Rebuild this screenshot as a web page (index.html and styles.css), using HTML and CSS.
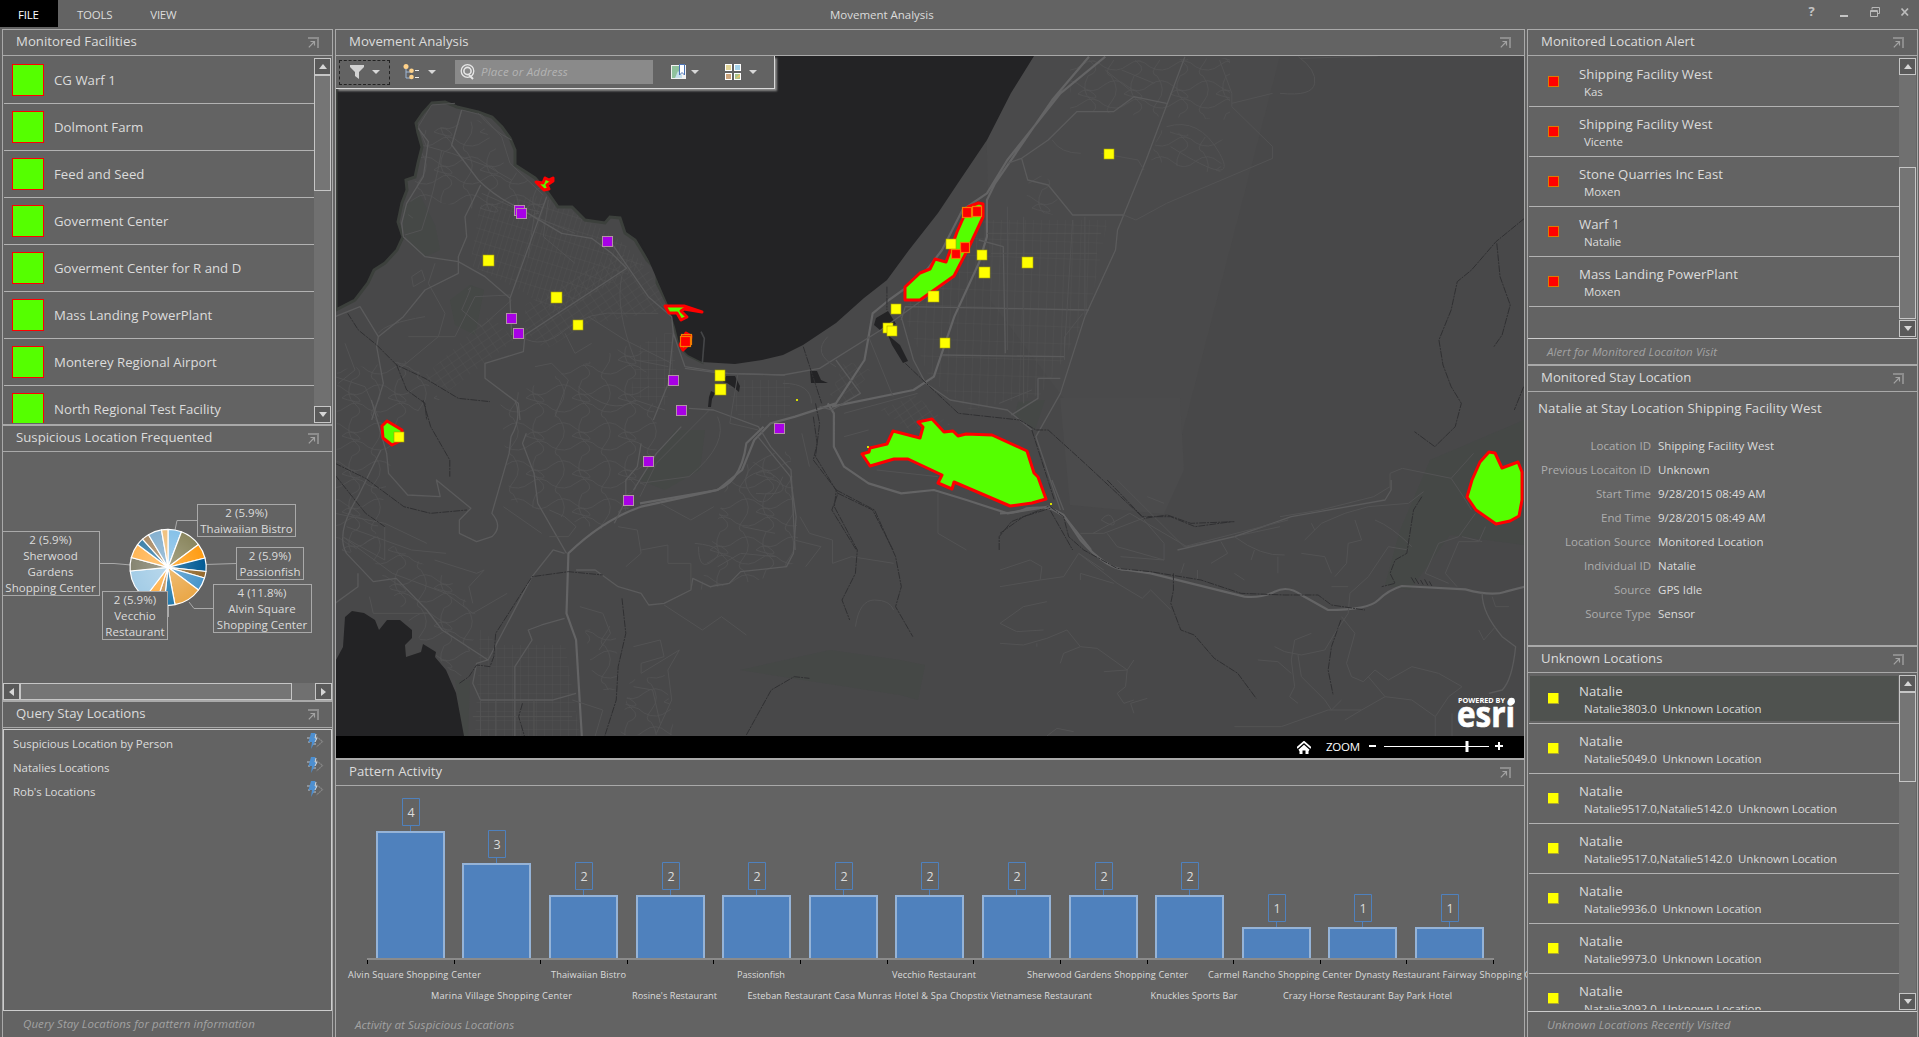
FILE: index.html
```html
<!DOCTYPE html>
<html lang="en">
<head>
<meta charset="utf-8">
<title>Movement Analysis</title>
<link rel="stylesheet" href="styles.css">
</head>
<body>
<svg class="defs" width="0" height="0">
  <defs>
    <symbol id="popout" viewBox="0 0 11 11"><path d="M0 1H10V11" fill="none" stroke="#8d8d8d" stroke-width="2"/><path d="M2.5 4.5H6.5V8.5M6.5 4.5L.8 10.3" fill="none" stroke="#a3a3a3" stroke-width="1.2"/></symbol>
    <symbol id="run" viewBox="0 0 17 17"><path d="M9.5 3.500L15.500 8.500L9.500 14" fill="none" stroke="#858585" stroke-width="1.200" stroke-dasharray="2 .6"/><path d="M3 5H0M3 9H1M9 11H6" stroke="#b9c4d0" stroke-width="1"/><path d="M4 0H8.500L7.500 5H10L4 16L5 9H1.500Z" fill="#4d8fd0"/><path d="M9 1L8 5H10L8 9" fill="none" stroke="#d5dde6"/></symbol>
    <symbol id="caret" viewBox="0 0 8 4"><path d="M0 0H8L4 4Z" fill="#d8d8d8"/></symbol>
  </defs>
</svg>
<header class="titlebar">
  <nav class="menu"><span class="menu-item active">FILE</span><span class="menu-item">TOOLS</span><span class="menu-item">VIEW</span></nav>
  <div class="app-title">Movement Analysis</div>
  <svg class="window-buttons" width="100" height="28" viewBox="1810 0 100 28">
    <text x="1808.500" y="16" class="help" font-size="13">?</text>
    <path d="M1840 16H1848" stroke="#c4c4c4" stroke-width="2"/>
    <path d="M1872 9.500V7.500H1879.500V13.500H1877.500M1870.500 10.500H1877.500V16.500H1870.500ZM1870.500 11.500H1877" fill="none" stroke="#b8b8b8"/>
    <path d="M1901.500 8.500L1908 15.500M1908 8.500L1901.500 15.500" stroke="#bcbcbc" stroke-width="1.8"/>
  </svg>
</header>
<main class="dashboard">
  <div class="column col-left">
    <section class="panel facilities">
      <h2 class="panel-head">Monitored Facilities<svg class="popout"><use href="#popout"/></svg></h2>
      <div class="scroll-area">
        <ul class="facility-list">
          <li><i></i>CG Warf 1</li><li><i></i>Dolmont Farm</li><li><i></i>Feed and Seed</li><li><i></i>Goverment Center</li><li><i></i>Goverment Center for R and D</li><li><i></i>Mass Landing PowerPlant</li><li><i></i>Monterey Regional Airport</li><li><i></i>North Regional Test Facility</li>
        </ul>
        <div class="vscroll"><b class="btn up"></b><b class="thumb t-facilities"></b><b class="btn down"></b></div>
      </div>
    </section>
    <section class="panel suspicious">
      <h2 class="panel-head">Suspicious Location Frequented<svg class="popout"><use href="#popout"/></svg></h2>
      <svg class="pie" viewBox="3 452 329 231">
        <defs>
          <radialGradient id="shine" gradientUnits="userSpaceOnUse" cx="168" cy="567.300" r="38"><stop offset="0" stop-color="#fff" stop-opacity=".25"/><stop offset="1" stop-color="#fff" stop-opacity="0"/></radialGradient>
        </defs>
        <g fill="none" stroke="#a9a9a9">
          <path d="M175 530L177 520.500H197M205 564.500L236 563.500M189 602L194 608.500H213M168.500 605V617M100 563.500H114L131 565"/>
        </g>
        <g stroke="#fff" stroke-width="1.200" stroke-linejoin="round">
          <path fill="#86c1e8" d="M168 567.300V529.300A38 38 0 0 1 181.500 531.800Z"/>
          <path fill="#8a865e" d="M168 567.300L181.500 531.800A38 38 0 0 1 198.500 544.600Z"/>
          <path fill="#ff9c12" d="M168 567.300L198.500 544.600A38 38 0 0 1 205 558Z"/>
          <path fill="#015a94" d="M168 567.300L205 558A38 38 0 0 1 206 571.500Z"/>
          <path fill="#93682c" d="M168 567.300L206 571.500A38 38 0 0 1 204.500 578Z"/>
          <path fill="#4795cb" d="M168 567.300L204.500 578A38 38 0 0 1 198.500 590Z"/>
          <path fill="#eaa747" d="M168 567.300L198.500 590A38 38 0 0 1 175 604.700Z"/>
          <path fill="#237aad" d="M168 567.300L175 604.700A38 38 0 0 1 164 605.100Z"/>
          <path fill="#c99253" d="M168 567.300L164 605.100A38 38 0 0 1 156 603.300Z"/>
          <path fill="#ffae42" d="M168 567.300L156 603.300A38 38 0 0 1 145 597.500Z"/>
          <path fill="#a3cce6" d="M168 567.300L145 597.500A38 38 0 0 1 130.200 571Z"/>
          <path fill="#858470" d="M168 567.300L130.200 571A38 38 0 0 1 131.300 557.500Z"/>
          <path fill="#ffb656" d="M168 567.300L131.300 557.500A38 38 0 0 1 137.500 544.600Z"/>
          <path fill="#3f82ab" d="M168 567.300L137.500 544.600A38 38 0 0 1 142.500 539.100Z"/>
          <path fill="#ab8c67" d="M168 567.300L142.500 539.100A38 38 0 0 1 148.500 534.700Z"/>
          <path fill="#85b0cf" d="M168 567.300L148.500 534.700A38 38 0 0 1 161.500 529.900Z"/>
          <path fill="#efc180" d="M168 567.300L161.500 529.900A38 38 0 0 1 168 529.300Z"/>
        </g>
        <circle cx="168" cy="567.300" r="38" fill="url(#shine)"/>
        <g class="callouts">
          <rect x="197.500" y="504.500" width="98" height="32"/><rect x="236.500" y="547.500" width="67" height="32"/><rect x="213.500" y="584.500" width="98" height="48"/><rect x="102.500" y="591.500" width="65" height="48"/><rect x="-.5" y="531.500" width="100" height="64"/>
        </g>
        <g class="pie-text">
          <text x="246.500" y="517">2 (5.9%)</text><text x="246.500" y="533">Thaiwaiian Bistro</text>
          <text x="270" y="560">2 (5.9%)</text><text x="270" y="576">Passionfish</text>
          <text x="262" y="597">4 (11.8%)</text><text x="262" y="613">Alvin Square</text><text x="262" y="629">Shopping Center</text>
          <text x="135" y="604">2 (5.9%)</text><text x="135" y="620">Vecchio</text><text x="135" y="636">Restaurant</text>
          <text x="50.500" y="544">2 (5.9%)</text><text x="50.500" y="560">Sherwood</text><text x="50.500" y="576">Gardens</text><text x="50.500" y="592">Shopping Center</text>
        </g>
      </svg>
      <div class="hscroll"><b class="btn left"></b><b class="thumb"></b><b class="btn right"></b></div>
    </section>
    <section class="panel queries">
      <h2 class="panel-head">Query Stay Locations<svg class="popout"><use href="#popout"/></svg></h2>
      <ul class="query-list">
        <li>Suspicious Location by Person<svg><use href="#run"/></svg></li>
        <li>Natalies Locations<svg><use href="#run"/></svg></li>
        <li>Rob's Locations<svg><use href="#run"/></svg></li>
      </ul>
      <footer class="panel-foot foot-query">Query Stay Locations for pattern information</footer>
    </section>
  </div>

  <div class="column col-center">
    <section class="panel map-panel">
      <h2 class="panel-head">Movement Analysis<svg class="popout"><use href="#popout"/></svg></h2>
      <div class="map">
        <svg class="basemap" viewBox="336 56 1188 680">
          <defs>
            <pattern id="grid-a" width="5" height="13" patternUnits="userSpaceOnUse" patternTransform="rotate(17)"><path d="M0 0H5M0 0V13" class="street"/></pattern>
            <pattern id="grid-b" width="9" height="7" patternUnits="userSpaceOnUse" patternTransform="rotate(-34)"><path d="M0 0H9M0 0V7" class="street"/></pattern>
            <pattern id="grid-c" width="8" height="17" patternUnits="userSpaceOnUse" patternTransform="rotate(2)"><path d="M0 0H8M0 0V17" class="street"/></pattern>
            <pattern id="grid-d" width="8" height="9" patternUnits="userSpaceOnUse"><path d="M0 0H8M0 0V9" class="street"/></pattern>
            <pattern id="curvy" width="46" height="38" patternUnits="userSpaceOnUse"><path d="M0 9Q12 0 23 10T46 9M7 0Q17 14 8 25T7 38M30 0Q22 15 33 24T30 38M0 29Q13 36 24 27T46 29M20 18Q28 10 36 18T20 18" class="street"/></pattern>
          </defs>
          <rect x="336" y="56" width="1189" height="680" fill="#484849"/>
          <path fill="#4a4a4b" d="M985 56H1280L1180 442L1065 400L990 300Z"/>
          <path fill="#4b4b4c" d="M1060 398H1180L1184 470L1164 514L1070 505Z"/>
          <g class="park">
            <path d="M403 230L403 207L420 195L435 225L440 250L425 257L410 245Z"/>
            <path d="M470 285L484 290L475 335L455 325L450 300Z"/>
            <path d="M740 670L830 650L900 660L925 665L918 700L900 695L790 678Z"/>
            <path d="M1430 460L1524 420V545L1450 535L1410 590L1385 585L1400 530Z"/>
            <path d="M675 430L705 430L700 470L665 490L640 480Z"/>
            <path d="M455 680H470L468 736H463Z"/>
            <path d="M1018 402L1045 400L1035 430L1015 415Z"/>
          </g>
          <g class="texture">
            <path fill="url(#grid-a)" d="M480 205L545 195L620 240L645 265L556 315L520 290L470 265Z"/>
            <path fill="url(#grid-b)" d="M525 305L620 252L650 272L668 310L585 325L545 350L525 330Z"/>
            <path fill="url(#grid-b)" d="M420 380L490 315L515 340L450 390Z"/>
            <path fill="url(#grid-d)" d="M640 345L672 330L676 370L665 405L630 395Z"/>
            <path fill="url(#grid-c)" d="M903 310L985 220H1108L1090 308L1062 362L1040 395L970 410L930 380Z"/>
            <path fill="url(#grid-d)" d="M480 630L500 645H565L580 736H475Z"/>
            <path fill="url(#grid-d)" d="M725 380H790V415L740 420Z"/>
            <path fill="url(#grid-b)" d="M845 360L870 370L850 405L830 395Z"/>
            <path fill="url(#grid-b)" d="M880 410L915 395L950 425L910 430Z"/>
            <g fill="url(#curvy)">
              <path d="M425 130L480 120L505 165L550 195L535 220L425 200L405 230Z"/>
              <path d="M337 370L410 360L440 400L400 420L375 540L336 560Z"/>
              <path d="M500 400L640 340L660 440L640 500L600 530L510 500Z"/>
              <path d="M1070 60H1150L1230 58V120L1130 115L1070 110Z"/>
              <path d="M1160 130L1225 140L1220 175L1150 160Z"/>
              <path d="M1030 170L1060 185L1055 215L1025 210Z"/>
              <path d="M730 470L790 450L800 560L760 580L700 590Z"/>
              <path d="M630 680L665 675L675 735H620Z"/>
              <path d="M585 630L615 625L620 690L595 690Z"/>
              <path d="M350 520L450 580L480 620L460 680L420 640Z"/>
            </g>
          </g>
          <g class="water">
            <path stroke="#3c403c" stroke-width="3" d="M336 310L355 300L368 283L374 270L385 263L397 250L403 237L398 222L402 203L407 190L406 180L415 177L418 163L422 147L418 133L416 123L423 113L432 103L445 102L457 107L478 112L492 117L502 127L510 138L515 150L515 165L535 178L548 193L558 207L572 207L585 220L605 223L610 217L620 218L625 233L635 240L647 260L657 270L657 283L668 305L675 327L680 347L688 355L702 362V56H336Z"/>
            <path d="M668 305L675 327L680 347L688 355L702 362L735 364L762 360L783 355L803 345L836 323L864 298L887 280L909 250L938 213L958 183L987 140L1011 93L1034 56H640V240Z"/>
            <path d="M336 660L343 647L345 617L352 611L364 613L375 620L379 630L387 620H400L412 630V638L405 645L406 657L421 652L423 644L436 652L435 657L446 670L456 693L461 720L464 736H336Z"/>
            <path d="M726 376H735L740 386L739 392L733 387L727 383L723 382ZM711 391L715 393L712 399L711 407H708L709 397Z"/>
            <path d="M876 318L888 311L896 324L880 330L874 325ZM888 335L900 345L908 361L903 363L892 345ZM810 371H817L821 380L828 383H811Z"/>
          </g>
          <g class="lots">
            <g transform="translate(335 50) scale(.33333)">
              <path class="minor" d="M380 180L440 195L500 260L525 340L625 435M360 160L290 165L250 230L275 290M430 190Q470 240 530 270M280 290L350 310L460 350L530 390M320 300Q300 420 260 540L210 555M440 430L600 500L720 550M300 640L280 700L330 790L310 860L190 960M130 850Q150 820 270 800M400 720Q420 690 380 780L440 830L530 750M230 680L260 660L270 690L235 710L230 680M560 860Q620 900 690 840T870 790L970 790M690 850L720 910L770 880M600 950L650 940L700 990L660 1100M760 800L870 870L1010 940M860 680Q840 780 900 930L1000 950M730 1010Q830 1100 900 1050L990 1080M0 980L90 1010L130 1100M30 880L60 960L10 1000M220 860L360 860L420 740L525 735M600 480L580 620M640 450L625 560L720 640"/>
              <path class="road" d="M380 180L350 285L430 390Q480 440 545 470L680 550L770 565L830 610L875 655L570 855L565 905L450 940L450 985L550 1060L555 1110M437 405L390 500L395 560L370 620L370 670L270 720L205 800L130 860L125 890L145 1000L110 1110M205 560L270 620L370 635L450 680L525 745L530 855M635 440L525 745M830 580L940 740L1010 800L1015 850L1050 950M1015 850L1000 1000L955 1110M1050 950L1180 970L1350 975M250 235L280 275L265 380L215 460L200 520L205 560M0 800L75 770L130 860"/>
              <path class="creek" d="M38 790L70 840L125 885L185 945L270 985L370 1045L465 1055M185 945L215 1020L270 1060L275 1110"/>
              <path class="pier" d="M1098 845L1108 865L1102 940"/>
            </g>
            <g transform="translate(640 50) scale(.40816 .33333)">
              <path class="highway" d="M1140 20L1030 130L900 330L850 430L790 480L740 600L690 680L610 750L570 790L550 930L480 1060L380 1100L320 1120L280 1170L250 1260L190 1320L0 1360M1100 20L1010 150L870 400L850 450L850 560L830 640L770 800L720 980L670 1020L470 1070M460 1060L475 1090V1190L500 1250L560 1300L640 1330L720 1320L800 1350L900 1390L1000 1370L1040 1400L1105 1500"/>
              <path class="road" d="M1335 20L1240 330L1170 540L1165 600L1090 800L1030 1030L970 1160L1030 1380M900 340L935 325L1000 270L1070 185H1160L1210 140L1290 160M935 325L950 390L1000 405L1060 495H1185M110 955L200 970L350 975L440 955L590 840L770 680M640 810L650 770L1100 780M640 800L670 930L700 1000L760 1050L900 1080L960 1140M740 915L1040 920M975 985H1030M910 1095L975 1045V985M830 570L890 590L895 910M440 1070L470 1080L540 1030L480 930M120 1075L180 1080L290 1130L320 1190L370 1260L380 1500"/>
              <path class="minor" d="M1185 495L1215 510L1290 460L1550 325V290L1450 170V130L1420 30M1450 160L1550 130M1140 60L1200 120M1130 310L1220 330L1235 360M1010 270Q1030 310 1080 310M1180 60L1260 100M1290 230Q1370 200 1420 310T1300 290M850 550H1130M860 610H1120M900 470V900M940 500V1060M1090 500V800M960 1020L880 1060M1085 790L1040 860V930M290 1140L220 1120L240 970M170 1080L40 1240L0 1340M190 1100Q220 1180 120 1280L0 1300M350 1000Q420 1000 420 1060M330 1210Q230 1260 270 1330T350 1280M500 1160L560 1140M580 1260L730 1280M730 1330V1450L800 1500M1130 1410Q1150 1380 1160 1410T1130 1410M1110 1450L1200 1390L1340 1490L1568 1430M1060 510L1040 900M560 860L620 1040M460 860Q420 910 480 950M500 1090L680 1030"/>
              <path class="creek" d="M650 940L710 1010L780 1090L930 1110L970 1140H1000L1090 1240L1230 1400L1300 1400L1360 1430L1450 1415M430 1060L440 1120L430 1220L485 1330L470 1380L530 1500M485 1330L570 1380L620 1500M880 1500V1460L910 1415L1000 1370L1060 1500M960 1140L1015 1350M605 710V780M400 890L445 1060"/>
            </g>
            <g transform="translate(335 400) scale(.38265 .33333)">
              <path class="highway" d="M1120 80L1075 130Q1060 260 980 275L800 320Q700 360 610 460L605 640L630 720L645 1008"/>
              <path class="road" d="M470 0Q490 50 460 110L455 160L410 340Q440 380 410 410L370 425L325 400V360L355 325L265 240L275 290L190 285L140 220L135 160L95 0M500 100L490 130L520 220L530 310L605 460M120 150L60 290Q0 400 30 460L100 545L160 535L240 630L280 690L400 780L370 790L360 850L380 900H570L630 880M600 460L570 450L515 530L400 780M630 510H680L740 560L800 580L820 615L860 610L930 570L935 535L980 560L1030 550L1060 515L1180 500L1198 460L1205 350L1190 230L1105 110M905 80L840 160L780 270M800 130L790 200L760 240V300L730 370M600 655L540 675L505 690L515 720L470 800V1008M60 520V560L0 610"/>
              <path class="minor" d="M20 410L150 520L290 580L360 640L450 580M90 590L100 640L240 640M130 380V480L20 410M30 380L200 450L290 460M260 480L370 520L390 510L350 560L360 610M0 340L130 370L240 430M860 615L960 690L1010 650L1075 705M740 380L790 390L800 460L760 500M800 450L870 435V490L930 490V570M950 440Q950 520 990 480T940 430M1000 500L1060 460L1150 470M850 310L930 360L990 320M1070 240Q1120 190 1160 240T1100 280M1065 380L1150 400M1215 350L1240 400L1300 420V490L1350 470L1460 490M1360 680Q1370 600 1410 600T1460 630M640 620L700 640L720 700L690 750M780 740L850 720L860 770L800 790V820L900 750L870 810L880 900L840 1000M780 860L830 870L850 970M620 900L700 930L680 1008M1200 420L1270 440L1230 500M1220 100L1240 200M560 330L600 350L630 380L610 410L560 410M440 320L540 400M380 900V1008M420 900V1008M520 900V1008M360 950H620"/>
              <path class="creek" d="M230 0L250 80L300 180V230M0 190L80 235L180 320L250 340L345 330M0 225L80 340L130 380M325 850L350 830L370 795L405 800L415 770L420 700L515 530L610 515L700 525M750 595L760 700L740 800L735 900L705 1008M1250 50L1260 130L1250 180L1310 270L1305 320L1365 450L1360 520L1325 600L1345 660M1310 270L1410 330L1465 470L1480 560L1465 620L1510 710M1075 1005L1140 870L1200 830L1240 835M490 910L480 950L495 1008"/>
            </g>
            <g transform="translate(1000 480) scale(.33482 .33333)">
              <path class="highway" d="M0 100Q50 100 80 85Q150 75 190 105L240 180Q320 270 380 270L450 280L730 350Q780 355 820 335T900 345L980 390Q1100 390 1130 360T1200 318L1390 328Q1470 350 1510 335L1568 320"/>
              <path class="road" d="M155 0L190 90M530 210L700 170L870 110L1150 60L1168 30V0M1440 340Q1440 400 1500 470L1540 500Q1530 600 1500 630L1460 640"/>
              <path class="minor" d="M350 0L550 200L860 120M0 270L90 240L125 260L120 300L0 320M120 300L190 290L235 220L350 310L425 355L450 330L510 390M235 220L310 270M240 300V280L340 310M240 160H310L440 110M320 160L350 200L490 240L490 190L430 120M440 50L490 70M700 170Q780 230 850 225M660 185L680 220L630 250M760 210L750 240M830 230V280M900 220L970 230L990 280M910 180L960 130L1030 100L1100 80L1220 70L1265 35M930 130L940 150M1060 120L1080 180L1040 190L1035 250L1000 290M1120 120Q1170 140 1230 200M990 320H1040M1220 210L1160 200L1100 290L1045 340L1040 400L1000 460L970 510L900 525L850 515L820 500M1020 410L1060 460L1035 550L1050 590L1085 605L1120 570L1160 600L1230 560L1310 580L1380 620M1100 590L1150 650L1080 690L980 690L840 740H700M1150 650L1230 660L1300 710V768M880 480L870 540L880 620L865 650L890 670M770 540L830 545L870 580M890 525L900 590L970 660L990 690L1020 660M930 460L880 480M1030 720L1080 690M0 430L70 380L140 365M0 430L50 455L130 450M0 490L70 495L140 475L200 450L240 500L290 505L380 570L375 620L350 640L370 670L400 660M310 575L380 570L400 540M180 550L190 520L240 500M400 700L390 670L440 655M140 768L170 745L220 755M1300 710L1340 650L1380 620M1350 700V768M1400 700L1440 650L1475 740M1430 450L1445 480L1480 440M1470 350L1480 380H1520M1380 170L1440 185M1420 100L1370 170L1310 190L1270 280L1340 310M1450 140L1430 185H1370L1330 280L1365 320M540 280L550 250M700 280L730 300M590 270V300M110 490V500M360 230L490 240"/>
              <path class="creek" d="M320 0L430 115L500 105L570 130L700 125M150 80L190 110L205 170L250 210L350 265L450 275L600 300L720 340L850 345L950 345L990 375L1090 390M518 280V330L510 370L540 450L580 465L640 535L710 580L765 655M1260 50L1235 90L1215 220L1180 240L1165 280L1180 310L1140 320M1018 420L990 500L980 570L995 645M0 160L70 110L150 85"/>
              <path class="creek" d="M1228 292L1240 312M1240 294L1252 314M1256 300L1264 314M1268 298L1278 316M1282 304L1290 318"/>
            </g>
            <g transform="translate(1280 0) scale(.4075 .33333)">
              <path class="creek" d="M600 655L530 725L470 810L435 845L420 930L390 1020L400 1095L420 1160L445 1210L430 1280L380 1340L330 1295M532 730L540 830L565 915L545 1005L525 1040M598 1160L575 1230"/>
              <path class="minor" d="M45 170Q90 210 85 250T0 280M50 175L240 168M0 1550L100 1530L230 1490L270 1460V1420L300 1405L420 1435L475 1360M420 1435L450 1490L470 1530"/>
            </g>
          </g>
          <g class="facility-shapes">
            <path d="M978.500 203L983 204V217L969 247L954 276L920 300H905V287L920 273L930 269L935 259L946 262L957 232L968 207Z"/>
            <path d="M918 422L932 419L944 432L953 431L958 436L966 434L992 435L1027 451L1034 473L1038 477L1046 499L1032 503L1010 506L954 482L952 489L938 483L942 475L908 459H894L870 466L862 454L869 452L870 448L887 444L893 431L920 438L923 427Z"/>
            <path d="M1489 452L1495 453L1502 468L1518 462L1522 472V500L1519 516L1510 521L1496 524L1476 510L1467 497L1472 480L1480 462Z"/>
            <path d="M536 182L543 183L545 178L549 180L553 178V181L547 185L549 189L544 190Z"/>
            <path d="M665 306H684L702 312L684 309L681 311L687 317L681 320L677 313L669 313Z"/>
            <path d="M686 333L691 336L690 343L683 350L680 345Z"/>
            <path d="M387 421L402 430V440L392 445L383 438L382 426Z"/>
          </g>
          <g class="purple"><rect x="514.500" y="205.500" width="10" height="10"/><rect x="516.500" y="208.500" width="10" height="10"/><rect x="602.500" y="236.500" width="10" height="10"/><rect x="506.500" y="313.500" width="10" height="10"/><rect x="513.500" y="328.500" width="10" height="10"/><rect x="668.500" y="375.500" width="10" height="10"/><rect x="676.500" y="405.500" width="10" height="10"/><rect x="774.500" y="423.500" width="10" height="10"/><rect x="643.500" y="456.500" width="10" height="10"/><rect x="623.500" y="495.500" width="10" height="10"/></g>
          <g class="yellow"><rect x="483" y="255" width="11" height="11"/><rect x="551" y="292" width="11" height="11"/><rect x="573" y="320" width="10" height="10"/><rect x="715" y="370" width="10" height="11"/><rect x="715" y="384" width="11" height="11"/><rect x="1104" y="149" width="10" height="10"/><rect x="946" y="239" width="10" height="10"/><rect x="977" y="250" width="10" height="10"/><rect x="979" y="267" width="11" height="11"/><rect x="1022" y="257" width="11" height="11"/><rect x="928" y="291" width="11" height="11"/><rect x="891" y="304" width="10" height="10"/><rect x="883" y="323" width="10" height="10"/><rect x="887" y="326" width="10" height="10"/><rect x="940" y="338" width="10" height="10"/><rect x="394" y="432" width="10" height="10"/></g>
          <path fill="#d8e000" d="M796 399H798V401H796ZM867 446H869V448H867ZM1050 503H1052V505H1050Z"/>
          <g class="red"><rect x="962.500" y="207.500" width="9" height="10"/><rect x="972.500" y="206.500" width="9" height="10"/><rect x="960.500" y="242.500" width="9" height="10"/><rect x="951.500" y="249.500" width="9" height="9"/><rect x="681.500" y="334.500" width="10" height="10"/><rect x="680.500" y="336.500" width="10" height="10"/></g>
          <g class="esri"><text x="1458" y="702.500" font-size="7.200" font-weight="700" textLength="47" lengthAdjust="spacingAndGlyphs">POWERED BY</text><text x="1457" y="726.500" font-size="35" font-weight="700" textLength="58" lengthAdjust="spacingAndGlyphs" stroke="#fff" stroke-width=".7">esri</text><circle cx="1511.500" cy="701.200" r="3.400"/></g>
        </svg>
        <div class="map-tools">
          <span class="tool focus"><svg width="14" height="14"><path d="M0 0H14V2L9 7V14L5 11V7L0 2Z" fill="#d2d2d2"/></svg><svg class="caret"><use href="#caret"/></svg></span>
          <span class="tool tree"><svg width="17" height="16"><path d="M3 4V14H7M3 8H7" stroke="#9fb8d8" fill="none"/><path d="M12 6.500H16M12 13.500H16" stroke="#eee"/><g fill="#ffd28a"><circle cx="3" cy="2.500" r="2.500"/><circle cx="8.500" cy="6.800" r="2.300"/><circle cx="8.500" cy="13" r="2.300"/></g></svg><svg class="caret"><use href="#caret"/></svg></span>
          <span class="search"><svg width="17" height="17"><circle cx="7.500" cy="7" r="6.300" fill="none" stroke="#e6e6e6" stroke-width="1.300"/><circle cx="7.500" cy="7" r="3.600" fill="none" stroke="#e6e6e6" stroke-width="1.600"/><path d="M9 11L13 15" stroke="#e6e6e6" stroke-width="2"/></svg>Place or Address</span>
          <span class="tool bookmark"><svg width="16" height="16"><path d="M0 1H15V15H0Z" fill="#f2f2f2"/><path d="M1 2H8V14H1Z" fill="#8fc19c"/><path d="M4 14L7 7L11 11V14Z" fill="#c6dfeb"/><path d="M8.500 .5H13.500V11L11 8.500L8.500 11Z" fill="#fff" stroke="#4a72b5"/></svg><svg class="caret"><use href="#caret"/></svg></span>
          <span class="tool gallery"><svg width="16" height="16"><path d="M0 0H7V7H0ZM9 0H16V7H9ZM0 9H7V16H0ZM9 9H16V16H9Z" fill="#fff"/><path d="M1 1H6V6H1Z" fill="#e2d597"/><path d="M10 1H15V6H10Z" fill="#a6d3ea"/><path d="M1 10H6V15H1Z" fill="#cda47c"/><path d="M10 10H15V15H10Z" fill="#a9c48d"/><path d="M10 15L15 10V13Z" fill="#ecc36a"/></svg><svg class="caret"><use href="#caret"/></svg></span>
        </div>
      </div>
      <div class="zoom-bar">
        <svg width="14" height="13"><path d="M0 7L7 .8L14 7M2 9.500L7 5L12 9.500" fill="none" stroke="#fff" stroke-width="1.700"/><path d="M2.500 8.500L7 4.500L11.500 8.500V13H8.500V9.500H5.500V13H2.500Z" fill="#fff"/></svg>
        <span>ZOOM</span>
        <svg class="slider" width="136" height="12"><path d="M0 5H7M126 5H134M130 1V9" stroke="#fff" stroke-width="2"/><path d="M15 5.500H120" stroke="#fff"/><path d="M98 0V11" stroke="#fff" stroke-width="3"/></svg>
      </div>
    </section>
    <section class="panel pattern">
      <h2 class="panel-head">Pattern Activity<svg class="popout"><use href="#popout"/></svg></h2>
      <svg class="bar-chart" viewBox="336 786 1191 226">
        <path d="M367 959H1494" stroke="#8b8b8b" stroke-width="2"/>
        <path class="ticks" d="M367.500 960V964M454.500 960V964M540.500 960V964M627.500 960V964M713.500 960V964M800.500 960V964M887.500 960V964M973.500 960V964M1060.500 960V964M1147.500 960V964M1233.500 960V964M1320.500 960V964M1406.500 960V964M1493.500 960V964"/>
        <g class="bars">
          <path d="M377 958V832H444V958M463 958V864H530V958M550 958V896H617V958M637 958V896H704V958M723 958V896H790V958M810 958V896H877V958M896 958V896H963V958M983 958V896H1050V958M1070 958V896H1137V958M1156 958V896H1223V958M1243 958V928H1310V958M1329 958V928H1396V958M1416 958V928H1483V958"/>
        </g>
        <path class="flags" d="M402.500 798.500H419.500V825.500H402.500ZM410.500 826V831M488.500 830.500H505.500V857.500H488.500ZM496.500 858V863M575.500 862.500H592.500V889.500H575.500ZM583.500 890V895M662.500 862.500H679.500V889.500H662.500ZM670.500 890V895M748.500 862.500H765.500V889.500H748.500ZM756.500 890V895M835.500 862.500H852.500V889.500H835.500ZM843.500 890V895M921.500 862.500H938.500V889.500H921.500ZM929.500 890V895M1008.500 862.500H1025.500V889.500H1008.500ZM1016.500 890V895M1095.500 862.500H1112.500V889.500H1095.500ZM1103.500 890V895M1181.500 862.500H1198.500V889.500H1181.500ZM1189.500 890V895M1268.500 894.500H1285.500V921.500H1268.500ZM1276.500 922V927M1354.500 894.500H1371.500V921.500H1354.500ZM1362.500 922V927M1441.500 894.500H1458.500V921.500H1441.500ZM1449.500 922V927"/>
        <g class="counts"><text x="411" y="817">4</text><text x="497" y="849">3</text><text x="584" y="881">2</text><text x="671" y="881">2</text><text x="757" y="881">2</text><text x="844" y="881">2</text><text x="930" y="881">2</text><text x="1017" y="881">2</text><text x="1104" y="881">2</text><text x="1190" y="881">2</text><text x="1277" y="913">1</text><text x="1363" y="913">1</text><text x="1450" y="913">1</text></g>
        <g class="axis">
          <text x="348" y="978" textLength="133">Alvin Square Shopping Center</text><text x="551" y="978" textLength="75">Thaiwaiian Bistro</text><text x="737" y="978" textLength="48">Passionfish</text><text x="892" y="978" textLength="84">Vecchio Restaurant</text><text x="1027" y="978" textLength="161">Sherwood Gardens Shopping Center</text><text x="1208" y="978" textLength="144">Carmel Rancho Shopping Center</text><text x="1355" y="978" textLength="85">Dynasty Restaurant</text><text x="1442.500" y="978" textLength="112">Fairway Shopping Center</text>
          <text x="431" y="999" textLength="141">Marina Village Shopping Center</text><text x="632" y="999" textLength="85">Rosine's Restaurant</text><text x="747.500" y="999" textLength="84">Esteban Restaurant</text><text x="834" y="999" textLength="113">Casa Munras Hotel &amp; Spa</text><text x="950" y="999" textLength="142">Chopstix Vietnamese Restaurant</text><text x="1150.500" y="999" textLength="87">Knuckles Sports Bar</text><text x="1283" y="999" textLength="102">Crazy Horse Restaurant</text><text x="1388" y="999" textLength="64">Bay Park Hotel</text>
        </g>
      </svg>
      <footer class="panel-foot foot-pattern">Activity at Suspicious Locations</footer>
    </section>
  </div>

  <div class="column col-right">
    <section class="panel alerts">
      <h2 class="panel-head">Monitored Location Alert<svg class="popout"><use href="#popout"/></svg></h2>
      <div class="scroll-area">
        <ul class="event-list">
          <li><i></i><div>Shipping Facility West<small>Kas</small></div></li>
          <li><i></i><div>Shipping Facility West<small>Vicente</small></div></li>
          <li><i></i><div>Stone Quarries Inc East<small>Moxen</small></div></li>
          <li><i></i><div>Warf 1<small>Natalie</small></div></li>
          <li><i></i><div>Mass Landing PowerPlant<small>Moxen</small></div></li>
        </ul>
        <div class="vscroll"><b class="btn up"></b><b class="thumb t-alerts"></b><b class="btn down"></b></div>
      </div>
      <footer class="panel-foot foot-right">Alert for Monitored Locaiton Visit</footer>
    </section>
    <section class="panel stay">
      <h2 class="panel-head">Monitored Stay Location<svg class="popout"><use href="#popout"/></svg></h2>
      <h3>Natalie at Stay Location Shipping Facility West</h3>
      <dl>
        <dt>Location ID</dt><dd>Shipping Facility West</dd>
        <dt>Previous Locaiton ID</dt><dd>Unknown</dd>
        <dt>Start Time</dt><dd>9/28/2015 08:49 AM</dd>
        <dt>End Time</dt><dd>9/28/2015 08:49 AM</dd>
        <dt>Location Source</dt><dd>Monitored Location</dd>
        <dt>Individual ID</dt><dd>Natalie</dd>
        <dt>Source</dt><dd>GPS Idle</dd>
        <dt>Source Type</dt><dd>Sensor</dd>
      </dl>
    </section>
    <section class="panel unknown">
      <h2 class="panel-head">Unknown Locations<svg class="popout"><use href="#popout"/></svg></h2>
      <div class="scroll-area">
        <ul class="event-list">
          <li class="selected"><i></i><div>Natalie<small>Natalie3803.0&nbsp; Unknown Location</small></div></li>
          <li><i></i><div>Natalie<small>Natalie5049.0&nbsp; Unknown Location</small></div></li>
          <li><i></i><div>Natalie<small>Natalie9517.0,Natalie5142.0&nbsp; Unknown Location</small></div></li>
          <li><i></i><div>Natalie<small>Natalie9517.0,Natalie5142.0&nbsp; Unknown Location</small></div></li>
          <li><i></i><div>Natalie<small>Natalie9936.0&nbsp; Unknown Location</small></div></li>
          <li><i></i><div>Natalie<small>Natalie9973.0&nbsp; Unknown Location</small></div></li>
          <li><i></i><div>Natalie<small>Natalie3092.0&nbsp; Unknown Location</small></div></li>
        </ul>
        <div class="vscroll"><b class="btn up"></b><b class="thumb t-unknown"></b><b class="btn down"></b></div>
      </div>
      <footer class="panel-foot foot-right">Unknown Locations Recently Visited</footer>
    </section>
  </div>
</main>
</body>
</html>
```
FILE: styles.css
```css
* { box-sizing: border-box; }
body { margin: 0; width: 1919px; height: 1037px; overflow: hidden; display: flex; flex-direction: column; background: #636363; color: #dcdcdc; font: 13.2px/18px "Open Sans", "Noto Sans", sans-serif; }
ul, dl, h2, h3 { margin: 0; padding: 0; list-style: none; font-weight: 400; }
svg { display: block; }
.defs { position: absolute; }

.titlebar { flex: none; height: 29px; display: flex; align-items: flex-start; justify-content: space-between; font-size: 11.5px; }
.menu { display: flex; width: 830px; }
.menu-item { height: 27px; line-height: 29px; padding: 0 19px; letter-spacing: -.25px; }
.menu-item.active { width: 58px; padding: 0 18px; background: #000; color: #fff; }
.app-title { flex: 1; line-height: 29px; letter-spacing: -.02px; }
.window-buttons { margin-right: 9px; overflow: visible; }
.help { fill: #c4c4c4; font-weight: 700; }

.dashboard { flex: 1; display: flex; gap: 2px; padding: 0 1px 0 2px; min-height: 0; }
.column { display: flex; flex-direction: column; background: #636363; }
.col-left { width: 331px; }
.col-center { width: 1190px; }
.col-right { width: 391px; z-index: 1; }
.panel { flex: none; display: flex; flex-direction: column; border: 1px solid #a9a9a9; min-height: 0; }
.panel:last-child { border-bottom: 0; }
.panel-head { flex: none; height: 26px; line-height: 23px; padding: 0 13px; display: flex; align-items: flex-start; justify-content: space-between; border-bottom: 1px solid #a9a9a9; font-size: 13.2px; letter-spacing: .02px; }
.popout { width: 11px; height: 11px; margin-top: 7px; }
.facilities { height: 396px; }
.suspicious { height: 276px; }
.queries { height: 336px; }
.map-panel { height: 730px; }
.pattern { height: 278px; }
.alerts { height: 336px; }
.stay { height: 281px; }
.unknown { height: 391px; }

.scroll-area { flex: 1; min-height: 0; display: flex; padding: 1px; overflow: hidden; }
.scroll-area ul { flex: 1; overflow: hidden; }
.facility-list li { display: flex; align-items: center; gap: 10px; height: 47px; padding-left: 8px; border-bottom: 1px solid #b2b2b2; letter-spacing: .02px; }
.facilities .scroll-area { padding-top: 0; }
.facility-list li:nth-child(1) { height: 48px; }
.facility-list i { width: 32px; height: 32px; background: #5f0; border: 1px solid #f00; }
.vscroll { width: 17px; margin-top: 1px; display: flex; flex-direction: column; background: #707070; }
.facilities .vscroll { margin-top: 0; border-top: 2px solid #636363; }
.btn { flex: none; display: grid; place-items: center; width: 17px; height: 17px; border: 1px solid #c6c6c6; background: #5a5a5a; }
.btn::before { content: ""; border: 4px solid transparent; }
.up::before { border-top: 0; border-bottom: 5px solid #d6d6d6; }
.down { margin-top: auto; }
.down::before { border-bottom: 0; border-top: 5px solid #d6d6d6; }
.left::before { border-left: 0; border-right: 5px solid #d6d6d6; }
.right::before { border-right: 0; border-left: 5px solid #d6d6d6; }
.right { margin-left: auto; }
.thumb { border: 1px solid #c6c6c6; background: #757575; }
.t-facilities { height: 116px; }
.t-alerts { height: 152px; margin-top: 92px; }
.t-unknown { height: 90px; }
.hscroll { height: 17px; display: flex; background: #707070; }
.hscroll .thumb { width: 272px; }

.pie { width: 329px; height: 231px; }
.callouts rect { fill: #636363; stroke: #a9a9a9; }
.pie-text { fill: #dcdcdc; font-size: 11.5px; text-anchor: middle; letter-spacing: .05px; }

.query-list { flex: 1; margin-top: 1px; padding-top: 2px; border: 1px solid #cdcdcd; font-size: 11.5px; }
.query-list li { height: 24px; padding: 0 7px 0 9px; display: flex; align-items: center; justify-content: space-between; letter-spacing: -.06px; }
.query-list svg { width: 17px; height: 17px; margin-top: -5px; }
.panel-foot { flex: none; height: 26px; line-height: 26px; font-size: 11.5px; font-style: italic; color: #a2a2a2; letter-spacing: .09px; }
.foot-query { padding-left: 20px; }
.foot-pattern { padding-left: 19px; }
.foot-right { padding-left: 19px; border-top: 1px solid #cdcdcd; }

.map { position: relative; width: 1188px; height: 680px; }
.basemap { width: 1188px; height: 680px; }
.street { fill: none; stroke: #575758; stroke-width: .8; }
.texture { opacity: .75; }
.park { fill: #444845; opacity: .75; }
.water { fill: #232325; }
.lots path { fill: none; vector-effect: non-scaling-stroke; stroke-linejoin: round; }
.lots .minor { stroke: #535354; stroke-width: 1; }
.lots .road { stroke: #5b5b5c; stroke-width: 1.3; }
.lots .highway { stroke: #646465; stroke-width: 2.2; }
.lots .creek { stroke: #303032; stroke-width: 1; stroke-dasharray: 7 1 2 1; }
.lots .pier { stroke: #454648; stroke-width: 1.6; }
.facility-shapes { fill: #5f0; stroke: #f00; stroke-width: 3; stroke-linejoin: round; }
.purple { fill: #a800e6; stroke: #b48fa8; }
.yellow { fill: #ff0; stroke: #aaa400; stroke-width: .6; }
.red { fill: #f00; stroke: #f57c00; stroke-width: 1.2; }
.esri { fill: #fff; }
.map-tools { position: absolute; left: 0; top: 0; width: 439px; height: 33px; display: flex; align-items: center; background: #636363; border: solid #d9d9d9; border-width: 0 1px 1px 0; box-shadow: 2px 2px 2px #8d8d8d; }
.tool { display: flex; align-items: center; height: 25px; gap: 8px; }
.tool.focus { width: 51px; margin-left: 3px; padding-left: 10px; border: 1px dashed #222; }
.caret { width: 8px; height: 4px; }
.tree { margin-left: 13px; }
.search { width: 198px; height: 24px; margin-left: 19px; padding-left: 5px; display: flex; align-items: center; gap: 4px; background: #8a8a8a; color: #b4b4b4; font-size: 11.5px; font-style: italic; letter-spacing: .2px; }
.bookmark { margin-left: 18px; gap: 4px; }
.gallery { margin-left: 26px; }
.zoom-bar { height: 22px; display: flex; align-items: center; justify-content: flex-end; padding-right: 19px; background: #000; color: #fff; font-size: 11.5px; }
.zoom-bar span { margin: 0 9px 0 15px; letter-spacing: -.2px; }

.bar-chart { width: 1191px; height: 226px; flex: none; overflow: hidden; }
.ticks { stroke: #000; }
.bars path { fill: #4f81bd; stroke: #95b3d7; stroke-width: 2; }
.flags { fill: none; stroke: #4f81bd; }
.counts { fill: #dcdcdc; font-size: 12.5px; text-anchor: middle; }
.axis { fill: #dcdcdc; font-size: 9.2px; }

.event-list li { display: flex; height: 50px; padding: 19px 0 0 19px; border-bottom: 1px solid #b2b2b2; }
.event-list i { flex: none; width: 11px; height: 11px; }
.event-list div { margin: -11px 0 0 20px; letter-spacing: .05px; }
.event-list small { display: block; padding-left: 5px; font-size: 11.5px; letter-spacing: -.08px; }
.alerts i { background: #f00; border: 1px solid #e07a00; }
.unknown i { background: #ff0; border: solid #a8a430; border-width: 0 1px 1px 0; }
.selected { background: linear-gradient(#4f524f, #4f524f) 1px 2px / 368px 45px no-repeat; }
h3 { padding: 7px 0 0 10px; font-size: 13.2px; letter-spacing: .08px; }
dl { display: grid; grid-template-columns: 123px 1fr; column-gap: 7px; margin-top: 17px; font-size: 11.5px; line-height: 24px; letter-spacing: .02px; }
dt { text-align: right; color: #adadad; }
dd { margin: 0; }
```
